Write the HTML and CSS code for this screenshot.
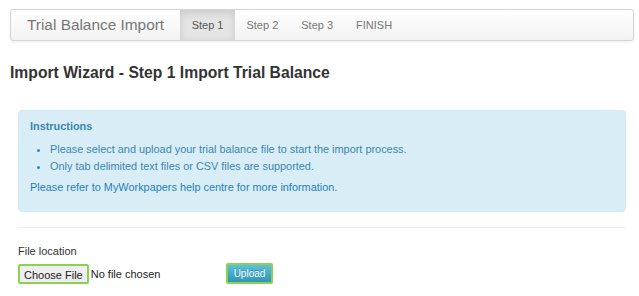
FILE: index.html
```html
<!DOCTYPE html>
<html>
<head>
    <title>Trial Balance Import</title>
    <link rel="stylesheet" href="styles.css">
</head>
<body>
    <div class="wizard">
        <nav class="navbar">
            <span class="navbar__brand">Trial Balance Import</span>
            <ul class="navbar__nav">
                <li class="navbar__item navbar__item--active">Step 1</li>
                <li class="navbar__item">Step 2</li>
                <li class="navbar__item">Step 3</li>
                <li class="navbar__item">FINISH</li>
            </ul>
        </nav>

        <h1 class="wizard__title">Import Wizard - Step 1 Import Trial Balance</h1>

        <div class="alert">
            <div class="alert__heading">Instructions</div>
            <ul class="alert__list">
                <li>Please select and upload your trial balance file to start the import process.</li>
                <li>Only tab delimited text files or CSV files are supported.</li>
            </ul>
            <a class="alert__link" href="#">Please refer to MyWorkpapers help centre for more information.</a>
        </div>

        <hr class="wizard__rule">

        <div class="upload">
            <label class="upload__label">File location</label>
            <div class="upload__row">
                <div class="upload__file">
                    <span class="upload__choose">Choose File</span>
                    <span class="upload__status">No file chosen</span>
                </div>
                <button class="upload__button">Upload</button>
            </div>
        </div>
    </div>
</body>
</html>
```

FILE: styles.css
```css
* {
    margin: 0;
    padding: 0;
    box-sizing: border-box;
}

body {
    font-family: "Liberation Sans", Arial, sans-serif;
    color: #333333;
    background: #ffffff;
}

.wizard {
    padding: 9px 5px 0 10px;
}

.navbar {
    display: flex;
    align-items: stretch;
    height: 32px;
    border: 1px solid #d4d4d4;
    border-radius: 3px;
    background: linear-gradient(to bottom, #ffffff, #f2f2f2);
    box-shadow: 0 1px 3px rgba(0, 0, 0, 0.065);
}

.navbar__brand {
    display: flex;
    align-items: center;
    padding: 0 16px 0 16px;
    font-size: 15.4px;
    color: #777777;
}

.navbar__nav {
    display: flex;
    list-style: none;
}

.navbar__item {
    display: flex;
    align-items: center;
    padding: 0 11.5px;
    font-size: 11px;
    color: #777777;
}

.navbar__item--active {
    background: #e5e5e5;
    color: #555555;
    box-shadow: inset 0 3px 8px rgba(0, 0, 0, 0.125);
}

.wizard__title {
    margin: 22px 0 0 0;
    font-size: 15.7px;
    font-weight: bold;
    color: #333333;
    line-height: 20px;
}

.alert {
    margin: 27px 8px 0 8px;
    padding: 8px 11px 16px 11px;
    background: #d9edf7;
    border: 1px solid #d1e9f4;
    border-radius: 4px;
    color: #3a87ad;
    font-size: 10.9px;
}

.alert__heading {
    font-weight: bold;
    line-height: 14px;
}

.alert__list {
    margin: 8px 0 4px 20px;
    line-height: 17px;
}

.alert__link {
    color: #1f7fc0;
    text-decoration: none;
    line-height: 16px;
}

.wizard__rule {
    margin: 15px 8px 0 8px;
    border: 0;
    border-top: 1px solid #eeeeee;
}

.upload {
    padding: 16px 8px 0 8px;
    font-size: 11px;
}

.upload__label {
    display: block;
    color: #333333;
    line-height: 14px;
}

.upload__row {
    display: flex;
    align-items: center;
    margin-top: 5px;
}

.upload__file {
    display: flex;
    align-items: center;
    width: 208px;
}

.upload__choose {
    height: 20px;
    padding: 2px 4px;
    font-size: 11px;
    line-height: 14px;
    color: #222222;
    background: #efefef;
    border: 2px solid #8cd152;
    border-radius: 2px;
}

.upload__status {
    margin-left: 2px;
    font-size: 11px;
    color: #222222;
}

.upload__button {
    height: 21px;
    width: 47px;
    font-family: inherit;
    font-size: 10px;
    color: #ffffff;
    background: linear-gradient(to bottom, #5bc0de, #2f96b4);
    border: 2px solid #8cd152;
    border-radius: 2px;
    text-shadow: 0 -1px 0 rgba(0, 0, 0, 0.25);
}
```
